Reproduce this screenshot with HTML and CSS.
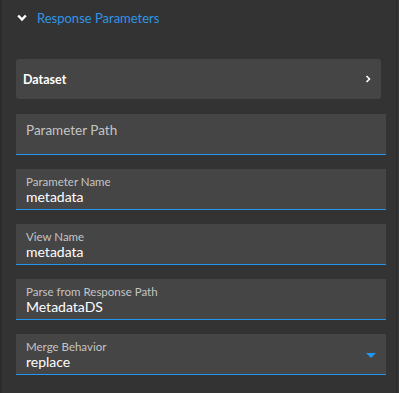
FILE: index.html
```html
<!DOCTYPE html>
<html>
<head>
<link rel="stylesheet" href="styles.css">
</head>
<body>
<div class="panel">
<div class="section-head">
<svg class="caret" width="10" height="8" viewBox="0 0 10 8"><path d="M1.2 1.5 L5 5.6 L8.8 1.5" fill="none" stroke="#fff" stroke-width="2.4"/></svg>
<span class="section-title">Response Parameters</span>
</div>
<div class="section-body">
<div class="nav-card">
<span class="nav-label">Dataset</span>
<svg class="nav-arrow" width="6" height="8" viewBox="0 0 6 8"><path d="M1.5 1 L4.5 4 L1.5 7" fill="none" stroke="#fff" stroke-width="1.6"/></svg>
</div>
<div class="field empty">
<div class="field-placeholder">Parameter Path</div>
</div>
<div class="field">
<div class="field-label">Parameter Name</div>
<div class="field-value">metadata</div>
</div>
<div class="field">
<div class="field-label">View Name</div>
<div class="field-value">metadata</div>
</div>
<div class="field">
<div class="field-label">Parse from Response Path</div>
<div class="field-value">MetadataDS</div>
</div>
<div class="field select">
<div class="field-text">
<div class="field-label">Merge Behavior</div>
<div class="field-value">replace</div>
</div>
<svg class="drop" width="10" height="5" viewBox="0 0 10 5"><path d="M0 0 H10 L5 5 Z" fill="#2196f3"/></svg>
</div>
</div>
</div>
</body>
</html>
```
FILE: styles.css
```css
body {
margin: 0;
background: #333333;
font-family: Lato, "Noto Sans", sans-serif;
width: 399px;
height: 393px;
overflow: hidden;
}

.panel {
height: 393px;
border-left: 2px solid #2c2c2c;
border-right: 1px solid #2b2b2b;
width: 394px;
background: #333333;
}

.section-head {
display: flex;
align-items: center;
height: 36px;
padding-left: 15px;
gap: 10px;
}

.section-title {
color: #2f95e6;
font-size: 13px;
}

.section-body {
display: flex;
flex-direction: column;
gap: 14px;
padding: 23px 10px 0 14px;
}

.nav-card {
display: flex;
align-items: center;
justify-content: space-between;
height: 40px;
width: 365px;
box-sizing: border-box;
padding: 0 10px 0 7px;
margin-bottom: 1px;
background: #454545;
border-radius: 3px;
}

.nav-label {
color: #fff;
font-weight: bold;
font-size: 12.5px;
}

.field {
display: flex;
flex-direction: column;
justify-content: center;
height: 41px;
box-sizing: border-box;
padding: 2px 10px 0 10px;
background: #454545;
border-bottom: 1px solid #2196f3;
}

.field.empty {
justify-content: flex-start;
padding-top: 8px;
}

.field-placeholder {
color: #c4c4c4;
font-size: 13.5px;
}

.field-label {
color: #c4c4c4;
font-size: 11.5px;
line-height: 14px;
}

.field-value {
color: #fff;
font-size: 14px;
line-height: 16px;
}

.field.select {
flex-direction: row;
align-items: center;
justify-content: space-between;
}
```
